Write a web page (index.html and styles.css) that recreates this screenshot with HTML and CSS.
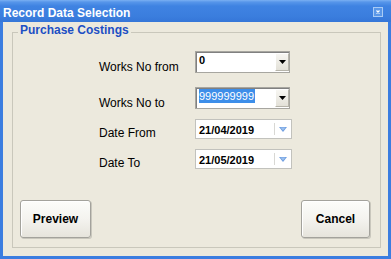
FILE: index.html
```html
<!DOCTYPE html>
<html>
<head>
<meta charset="utf-8">
<link rel="stylesheet" href="styles.css">
</head>
<body>
<div class="window">
  <div class="titlebar">
    <span class="title">Record Data Selection</span>
    <span class="close"><svg width="10" height="10" viewBox="0 0 10 10"><path d="M3.5 3.5 L6.5 6.5 M6.5 3.5 L3.5 6.5" stroke="#fff" stroke-width="1.2"/></svg></span>
  </div>
  <div class="client">
    <fieldset class="group">
      <legend>Purchase Costings</legend>
      <div class="form">
        <div class="row row-works first">
          <span class="label">Works No from</span>
          <div class="combo"><span class="value">0</span><span class="drop"><svg width="7" height="4" viewBox="0 0 7 4"><path d="M0 0 H7 L3.5 4 Z" fill="#000"/></svg></span></div>
        </div>
        <div class="row row-works second">
          <span class="label">Works No to</span>
          <div class="combo"><span class="value"><span class="sel">999999999</span></span><span class="drop"><svg width="7" height="4" viewBox="0 0 7 4"><path d="M0 0 H7 L3.5 4 Z" fill="#000"/></svg></span></div>
        </div>
        <div class="row row-date third">
          <span class="label">Date From</span>
          <div class="date"><span class="value">21/04/2019</span><span class="sep"></span><span class="dd"><svg width="8" height="5" viewBox="0 0 8 5"><path d="M0 0 H8 L4 5 Z" fill="#6e9ee0"/><path d="M1.5 0.5 H6.5 L4 3.5 Z" fill="#9cc0ee"/></svg></span></div>
        </div>
        <div class="row row-date fourth">
          <span class="label">Date To</span>
          <div class="date"><span class="value">21/05/2019</span><span class="sep"></span><span class="dd"><svg width="8" height="5" viewBox="0 0 8 5"><path d="M0 0 H8 L4 5 Z" fill="#6e9ee0"/><path d="M1.5 0.5 H6.5 L4 3.5 Z" fill="#9cc0ee"/></svg></span></div>
        </div>
      </div>
      <div class="actions">
        <button class="btn btn-preview">Preview</button>
        <button class="btn btn-cancel">Cancel</button>
      </div>
    </fieldset>
  </div>
</div>
</body>
</html>
```
FILE: styles.css
```css
html, body {
  margin: 0;
  padding: 0;
}
body {
  width: 391px;
  height: 259px;
  overflow: hidden;
  font-family: "Liberation Sans", Arial, sans-serif;
  font-size: 12px;
  color: #000;
}
.window {
  width: 391px;
  height: 259px;
  box-sizing: border-box;
  background: #3b7de0;
  display: flex;
  flex-direction: column;
}
.titlebar {
  height: 22px;
  flex: none;
  display: flex;
  align-items: flex-start;
  background: linear-gradient(to bottom, #7ab0f3 0px, #5796ea 2px, #3f83e2 6px, #3b7ede 16px, #3576d8 22px);
}
.title {
  color: #fff;
  font-weight: bold;
  font-size: 12px;
  line-height: 14px;
  padding-top: 6px;
  padding-left: 3px;
}
.close {
  margin-left: auto;
  margin-right: 8px;
  margin-top: 7px;
  width: 10px;
  height: 10px;
  box-sizing: border-box;
  border: 1px solid #a9cbf5;
  background: #5a97e8;
  display: flex;
  align-items: center;
  justify-content: center;
}
.close svg {
  display: block;
  margin: -1px;
}
.client {
  flex: 1;
  margin: 0 3px 3px 3px;
  background: #ECE9DD;
  display: flex;
  flex-direction: column;
}
.group {
  flex: 1;
  margin: 1px 7px 8px 9px;
  padding: 0;
  border: 1px solid #c9c7bb;
  display: flex;
  flex-direction: column;
  min-width: 0;
}
.group legend {
  margin-left: 5px;
  padding: 0 2px 5px 2px;
  font-weight: bold;
  font-size: 12px;
  line-height: 14px;
  color: #1d4fc4;
}
.form {
  padding-left: 86px;
  padding-top: 9px;
  display: flex;
  flex-direction: column;
}
.row {
  display: flex;
  align-items: flex-start;
}
.row-works {
  height: 22px;
}
.row-date {
  height: 20px;
}
.row.second {
  margin-top: 14px;
}
.row.third {
  margin-top: 10px;
}
.row.fourth {
  margin-top: 10px;
}
.label {
  width: 96px;
  flex: none;
  line-height: 14px;
  font-size: 12px;
}
.row-works .label {
  padding-top: 9px;
}
.row-date .label {
  padding-top: 7px;
}
.combo {
  width: 95px;
  height: 22px;
  box-sizing: border-box;
  border: 1px solid #a7a6a0;
  box-shadow: inset 1px 1px 0 #808080;
  background: #fff;
  display: flex;
  align-items: flex-start;
}
.combo .value {
  flex: 1;
  padding: 1px 0 0 3px;
  font-size: 11px;
  font-weight: bold;
  line-height: 14px;
}
.combo .sel {
  background: #3d8ee9;
  color: #fff;
  font-weight: normal;
  display: inline-block;
  padding-right: 1px;
}
.drop {
  width: 14px;
  height: 18px;
  margin-top: 1px;
  box-sizing: border-box;
  background: linear-gradient(to bottom, #f7f6f2, #e3e1d8);
  border: 1px solid;
  border-color: #fff #b6b4aa #b6b4aa #fff;
  display: flex;
  align-items: center;
  justify-content: center;
}
.drop svg {
  display: block;
}
.date {
  width: 97px;
  height: 20px;
  box-sizing: border-box;
  border: 1px solid #c2c2bd;
  background: #fff;
  display: flex;
  align-items: flex-start;
}
.date .value {
  flex: 1;
  padding: 2px 0 0 3px;
  font-size: 11px;
  font-weight: bold;
  line-height: 16px;
}
.sep {
  width: 1px;
  height: 12px;
  margin-top: 3px;
  background: #d8d8d4;
}
.dd {
  width: 16px;
  height: 18px;
  display: flex;
  align-items: center;
  justify-content: center;
}
.dd svg {
  display: block;
}
.actions {
  margin-top: auto;
  display: flex;
  justify-content: space-between;
  padding: 0 10px 9px 7px;
}
.btn {
  height: 38px;
  box-sizing: border-box;
  border: 1px solid #a3a29c;
  border-radius: 3px;
  background: linear-gradient(to bottom, #fcfcfa 0%, #f4f3ef 50%, #e6e4dc 100%);
  box-shadow: inset 1px 1px 0 #fff, 1px 1px 0 #c9c7bd;
  font-family: "Liberation Sans", Arial, sans-serif;
  font-weight: bold;
  font-size: 12px;
  color: #000;
  padding: 0;
}
.btn-preview {
  width: 71px;
}
.btn-cancel {
  width: 69px;
}
```
